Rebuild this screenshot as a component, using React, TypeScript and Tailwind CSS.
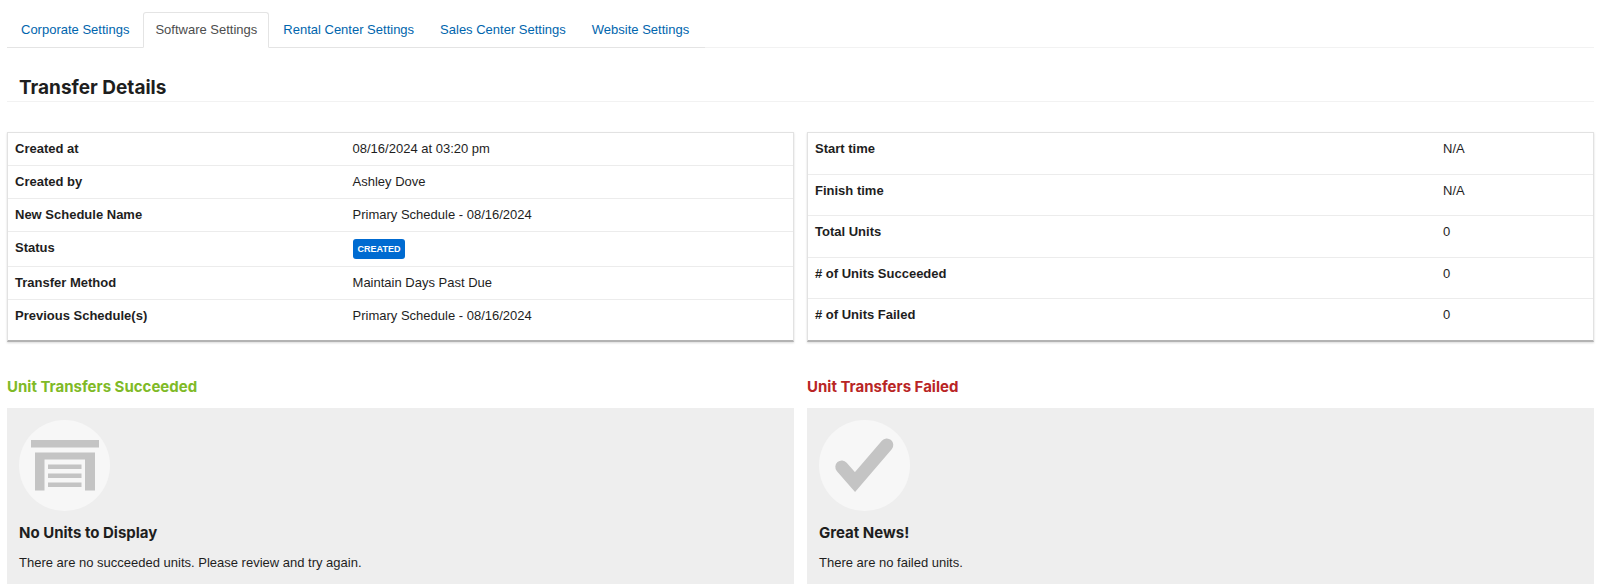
import React from "react";
import clsx from "clsx";

const tabs = [
  "Corporate Settings",
  "Software Settings",
  "Rental Center Settings",
  "Sales Center Settings",
  "Website Settings",
];

const details = [
  { label: "Created at", value: "08/16/2024 at 03:20 pm" },
  { label: "Created by", value: "Ashley Dove" },
  { label: "New Schedule Name", value: "Primary Schedule - 08/16/2024" },
  { label: "Status", value: <StatusBadge text="CREATED" /> },
  { label: "Transfer Method", value: "Maintain Days Past Due" },
  { label: "Previous Schedule(s)", value: "Primary Schedule - 08/16/2024" },
];

const totals = [
  { label: "Start time", value: "N/A" },
  { label: "Finish time", value: "N/A" },
  { label: "Total Units", value: "0" },
  { label: "# of Units Succeeded", value: "0" },
  { label: "# of Units Failed", value: "0" },
];

function StatusBadge({ text }: { text: string }) {
  return (
    <span className="inline-block align-top rounded-[3px] bg-[#006bd1] px-[5px] text-[9px] leading-5 font-bold text-white">
      {text}
    </span>
  );
}

const Tabs = () => (
  <nav className="border-b border-[#f2f2f2]">
    <ul className="flex w-fit -mb-px border-b border-[#e4e4e4] pr-[2px] pl-[2px]">
      {tabs.map((tab) => {
        const active = tab === "Software Settings";
        return (
          <li key={tab} className="-mb-px mr-[2px]">
            <a
              href="#"
              aria-current={active ? "page" : undefined}
              className={clsx(
                "block rounded-t-[3px] border px-[11px] py-2 leading-[18px]",
                active
                  ? "border-[#e4e4e4] border-b-white bg-white text-[#4d4d4d]"
                  : "border-transparent text-[#0065ad]"
              )}
            >
              {tab}
            </a>
          </li>
        );
      })}
    </ul>
  </nav>
);

const DetailTable = ({
  rows,
  labelWidth,
  className,
}: {
  rows: { label: string; value: React.ReactNode }[];
  labelWidth: string;
  className: string;
}) => (
  <div className="flex border border-b-2 border-[#e2e2e2] border-b-[#b3b3b3] shadow-[0_1px_2px_rgba(0,0,0,0.15)]">
    <table className={clsx("w-full table-fixed", className)}>
      <tbody>
        {rows.map((row) => (
          <tr key={row.label} className="border-b border-[#ececec] last:border-b-0">
            <th
              scope="row"
              className={clsx("p-[7px] text-left align-top font-bold", labelWidth)}
            >
              {row.label}
            </th>
            <td className="p-[7px] align-top">{row.value}</td>
          </tr>
        ))}
      </tbody>
    </table>
  </div>
);

const GarageIcon = () => (
  <svg viewBox="0 0 91 91" className="size-[91px]" aria-hidden="true">
    <circle cx="45.5" cy="45.5" r="45.5" fill="#f7f7f7" />
    <g fill="#c4c4c4">
      <rect x="12" y="20" width="68" height="7.5" />
      <path d="M16 32.5h60v38H66V39.5H25.5v31H16z" />
      <rect x="29" y="44.5" width="33.5" height="4.5" />
      <rect x="29" y="53.5" width="33.5" height="4.5" />
      <rect x="29" y="62.5" width="33.5" height="4.5" />
    </g>
  </svg>
);

const CheckIcon = () => (
  <svg viewBox="0 0 91 91" className="size-[91px]" aria-hidden="true">
    <circle cx="45.5" cy="45.5" r="45.5" fill="#f7f7f7" />
    <path
      d="M22.8 47L36 62 67.8 25"
      fill="none"
      stroke="#c4c4c4"
      strokeWidth="13"
      strokeLinecap="round"
      strokeLinejoin="miter"
    />
  </svg>
);

const EmptyPanel = ({
  title,
  titleColor,
  icon,
  heading,
  message,
}: {
  title: string;
  titleColor: string;
  icon: React.ReactNode;
  heading: string;
  message: string;
}) => (
  <section>
    <h2 className={clsx("font-[Inter,sans-serif] text-[15px] leading-5 font-bold", titleColor)}>
      {title}
    </h2>
    <div className="mt-[11px] bg-[#eee] p-3">
      {icon}
      <h3 className="mt-3 font-[Inter,sans-serif] text-[15px] leading-5 font-bold">{heading}</h3>
      <p className="mt-[11px] leading-[18px]">{message}</p>
    </div>
  </section>
);

const App = () => {
  return (
    <main className="bg-white pt-3 pr-[6px] pb-[2px] pl-[7px] font-['Liberation_Sans',Arial,sans-serif] text-[13px] leading-[18px] text-[#1e1e1e]">
      <Tabs />
      <h1 className="mt-[27px] border-b border-[#f2f2f2] px-3 font-[Inter,sans-serif] text-[19px] leading-[26px] font-bold">
        Transfer Details
      </h1>

      <div className="mt-[30px] grid grid-cols-2 gap-[13px]">
        <DetailTable rows={details} labelWidth="w-[43%]" className="self-start" />
        <DetailTable rows={totals} labelWidth="w-[80%]" className="h-[207px]" />
      </div>

      <div className="mt-[35px] grid grid-cols-2 gap-[13px]">
        <EmptyPanel
          title="Unit Transfers Succeeded"
          titleColor="text-[#7fba27]"
          icon={<GarageIcon />}
          heading="No Units to Display"
          message="There are no succeeded units. Please review and try again."
        />
        <EmptyPanel
          title="Unit Transfers Failed"
          titleColor="text-[#b92525]"
          icon={<CheckIcon />}
          heading="Great News!"
          message="There are no failed units."
        />
      </div>
    </main>
  );
};

export default App;
